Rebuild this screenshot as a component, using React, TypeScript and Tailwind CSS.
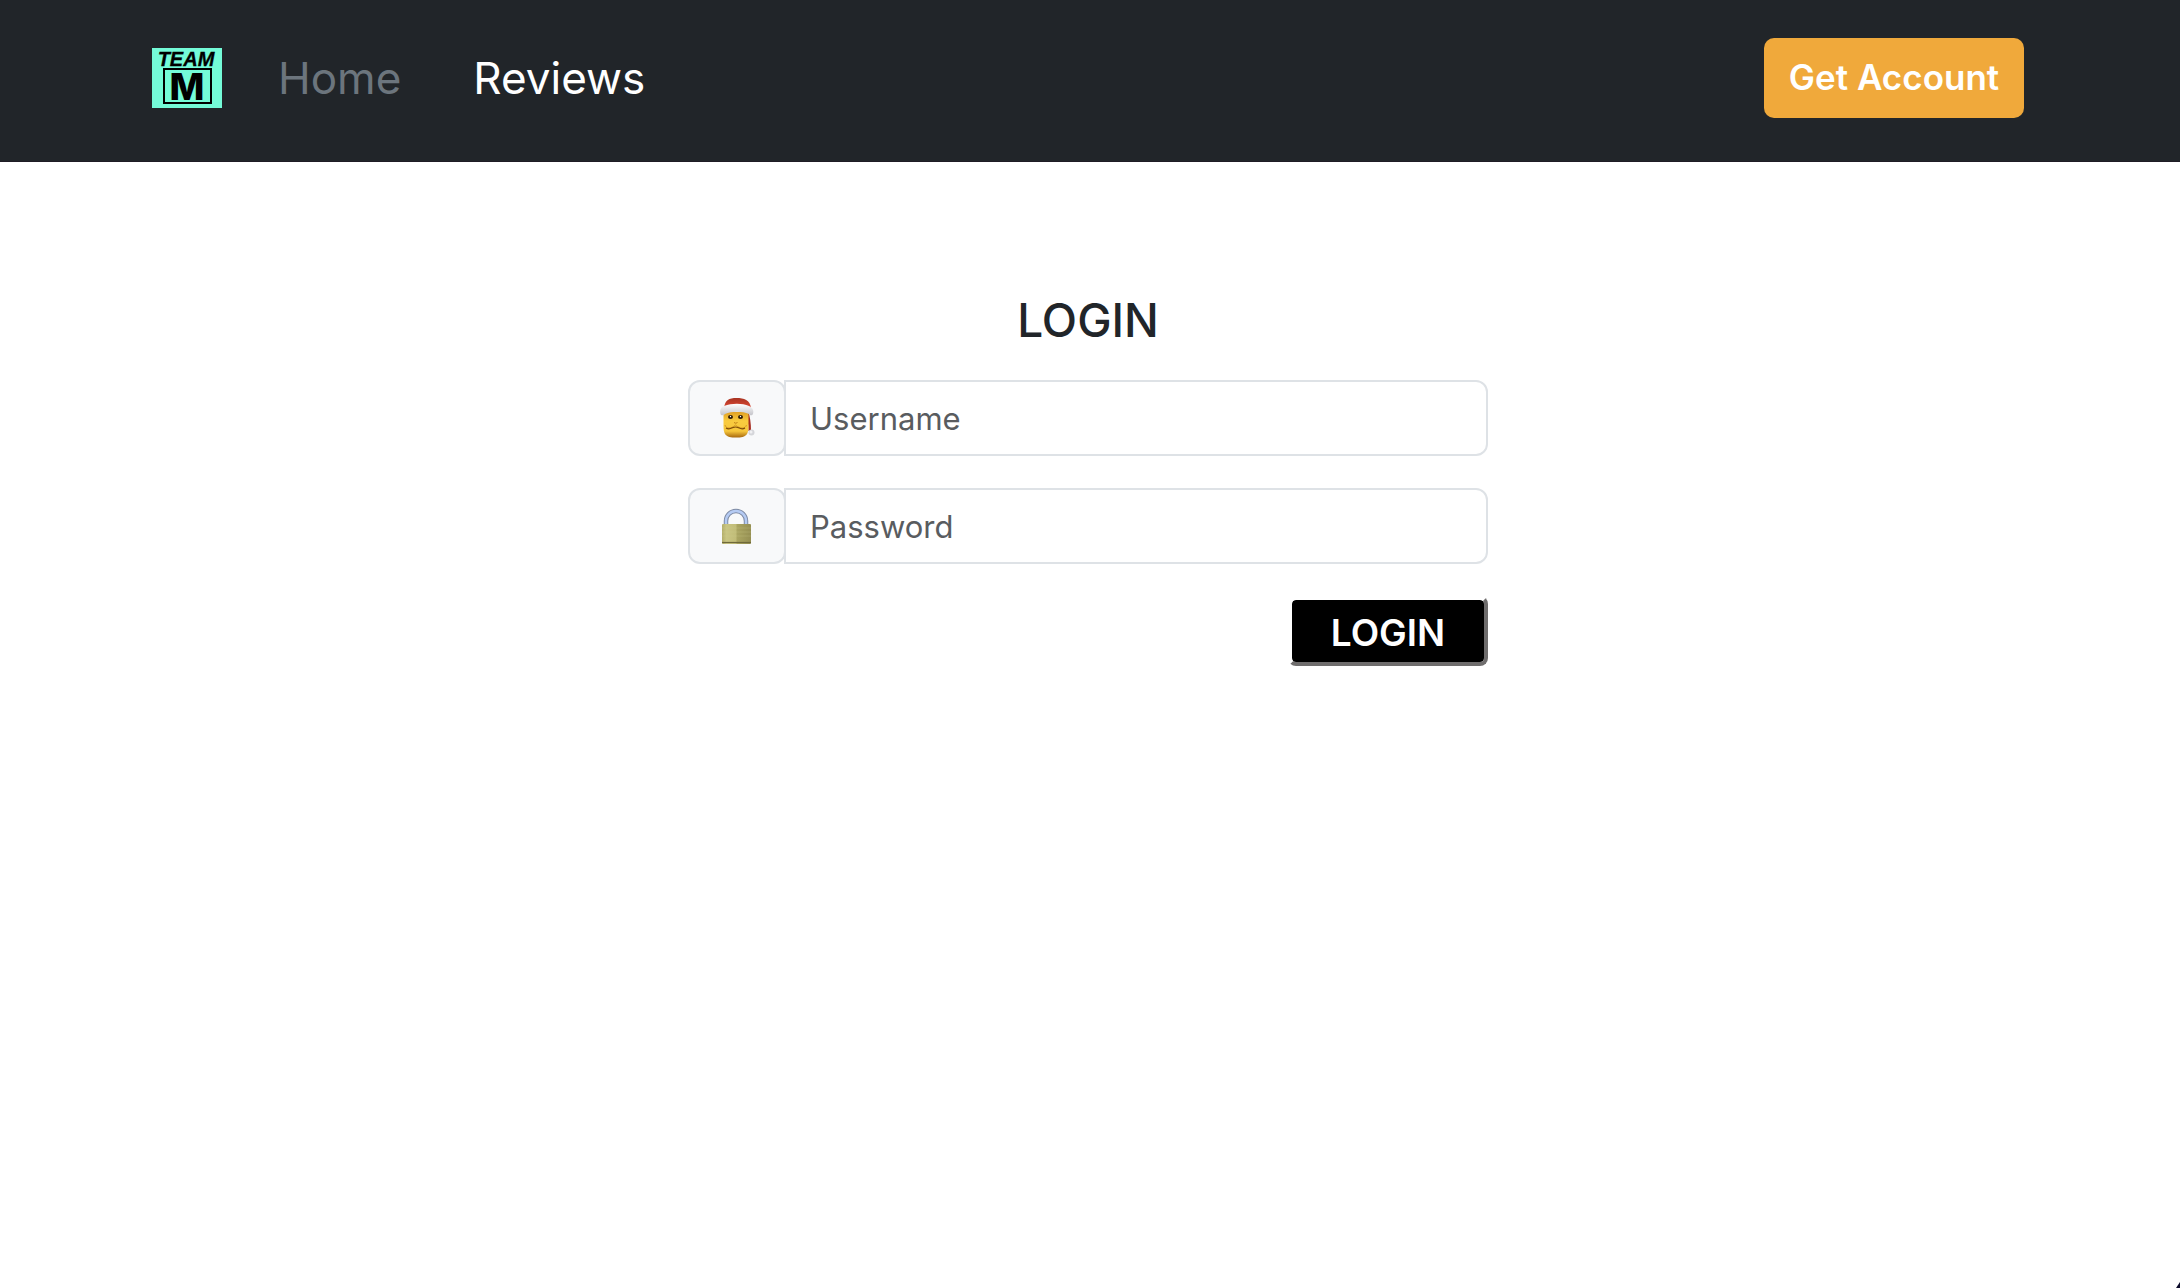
import type { ReactNode } from "react";

function Logo() {
  return (
    <svg viewBox="0 0 70 60" className="h-[60px] w-[70px]" role="img" aria-label="Team M">
      <rect width="70" height="60" fill="#74fbd8" />
      <text
        x="34"
        y="18"
        textAnchor="middle"
        fontFamily="'Liberation Sans', sans-serif"
        fontSize="20"
        fontWeight="700"
        fontStyle="italic"
        fill="#000"
        stroke="#000"
        strokeWidth="0.3"
      >
        TEAM
      </text>
      <rect x="12" y="21" width="47" height="34" fill="none" stroke="#000" strokeWidth="2" />
      <text
        x="35"
        y="52"
        textAnchor="middle"
        fontFamily="Inter, sans-serif"
        fontSize="37"
        fontWeight="800"
        fill="#000"
      >
        M
      </text>
    </svg>
  );
}

function SantaIcon() {
  return (
    <svg viewBox="0 0 36 42" className="h-[42px] w-9" role="img" aria-label="Username">
      <defs>
        <linearGradient id="face" x1="0" y1="0" x2="0" y2="1">
          <stop offset="0" stopColor="#e0a024" />
          <stop offset="0.35" stopColor="#f9cb3f" />
          <stop offset="0.75" stopColor="#f6c63c" />
          <stop offset="1" stopColor="#a8690f" />
        </linearGradient>
        <linearGradient id="hat" x1="0" y1="0" x2="0" y2="1">
          <stop offset="0" stopColor="#a83422" />
          <stop offset="1" stopColor="#de4833" />
        </linearGradient>
        <linearGradient id="fur" x1="0" y1="0" x2="0" y2="1">
          <stop offset="0" stopColor="#fff" />
          <stop offset="1" stopColor="#c4c4c9" />
        </linearGradient>
      </defs>
      <path d="M29 14c2 5 3 12 3 20h-2.500c0-7-1-12-2.500-18z" fill="#a52c1f" />
      <path d="M4.500 15h25v13c0 5-.5 7-1.500 9-2 3-6 3.500-11 3.500S8 40 6 37c-1-2-1.500-4-1.500-9z" fill="url(#face)" />
      <path d="M5 11C6 3 10 1 17.500 1S31 3 32 11z" fill="url(#hat)" />
      <path d="M1.500 17C.5 13 2 10 5 9c8-3 18-3 25 0 4 2 5 5 4 8-1 2-3 1.500-4 0-7-3-17-3-24 0-1 1.500-4 2-4.500 0z" fill="url(#fur)" />
      <circle cx="32.500" cy="35.500" r="3" fill="#d5d6da" />
      <circle cx="32" cy="35" r="1.500" fill="#f0f0f2" />
      <ellipse cx="11.500" cy="20" rx="2.500" ry="1.900" fill="#2c1a08" />
      <ellipse cx="21.500" cy="20" rx="2.500" ry="1.900" fill="#2c1a08" />
      <circle cx="11.500" cy="19.500" r=".7" fill="#fff" />
      <circle cx="21.500" cy="19.500" r=".7" fill="#fff" />
      <path d="M15 25.500q1.800 1.500 3.500 0" fill="none" stroke="#c08017" strokeWidth="1" />
      <path d="M6 28c1 4 6 4 10.500 0 4.500 4 10 4 11 0" fill="none" stroke="#d79b21" strokeWidth="1" />
      <path d="M7 31c3 2 5 .5 7-.5q2.500-1 5 0c2 1 4 2.500 7 .5" fill="none" stroke="#7d4a08" strokeWidth="1.200" />
    </svg>
  );
}

function LockIcon() {
  return (
    <svg viewBox="0 0 36 42" className="h-[42px] w-9" role="img" aria-label="Password">
      <defs>
        <linearGradient id="brass" x1="0" y1="0" x2="1" y2="0">
          <stop offset="0" stopColor="#b3ad69" />
          <stop offset="0.15" stopColor="#c9c582" />
          <stop offset="0.48" stopColor="#c1bc78" />
          <stop offset="0.52" stopColor="#aaa561" />
          <stop offset="1" stopColor="#958f52" />
        </linearGradient>
      </defs>
      <path d="M7 20v-4a10 10 0 0 1 20 0v4" fill="none" stroke="#7d8aa3" strokeWidth="4.500" />
      <path d="M7 20v-4a10 10 0 0 1 20 0v4" fill="none" stroke="#b5cbf3" strokeWidth="2.500" />
      <rect x="3" y="19" width="29" height="20" rx="1" fill="url(#brass)" />
      <path d="M3 23h29M3 27h29M3 31h29" stroke="#d5d192" strokeOpacity=".25" strokeWidth="1" />
      <path d="M3 37.500h29" stroke="#6f693a" strokeWidth="1.200" />
    </svg>
  );
}

function Field({ id, label, type, icon }: { id: string; label: string; type: string; icon: ReactNode }) {
  return (
    <div className="flex h-[76px]">
      <label
        htmlFor={id}
        className="flex w-[98px] shrink-0 items-center justify-center rounded-xl border-2 border-[#dee2e6] bg-[#f8f9fa]"
      >
        {icon}
      </label>
      <input
        id={id}
        type={type}
        placeholder={label}
        className="-ml-0.5 min-w-0 flex-1 rounded-r-xl border-2 border-[#dee2e6] bg-white px-6 pt-0.5 text-[31px] text-[#212529] placeholder:text-[#595c5f]"
      />
    </div>
  );
}

export default function App() {
  return (
    <div className="relative min-h-screen bg-white font-['Inter',sans-serif] text-[#212529]">
      <header className="flex h-[162px] items-start border-b border-[#1f1c25] bg-[#212529] pr-[156px] pl-[152px]">
        <a href="#" className="mt-12">
          <Logo />
        </a>
        <nav className="mt-12 ml-14 flex gap-[72px] text-[44px] leading-[60px]">
          <a href="#" className="text-[#6c757d]">Home</a>
          <a href="#" className="text-white">Reviews</a>
        </nav>
        <button
          type="button"
          className="mt-[38px] ml-auto h-20 w-[260px] rounded-[10px] bg-[#f0a93b] pb-0.5 text-[35px] font-semibold text-white"
        >
          Get Account
        </button>
      </header>
      <main className="pt-[130px] pr-1">
        <form className="mx-auto flex w-full max-w-[800px] flex-col">
          <h1 className="mb-8 text-center text-[46px] leading-[56px] font-medium">LOGIN</h1>
          <div className="flex flex-col gap-8">
            <Field id="username" label="Username" type="text" icon={<SantaIcon />} />
            <Field id="password" label="Password" type="password" icon={<LockIcon />} />
          </div>
          <button
            type="button"
            className="mt-8 h-[70px] w-[200px] self-end rounded-lg border-4 border-t-white border-r-[#6f6d6d] border-b-[#6f6d6d] border-l-white bg-black bg-clip-padding pt-0.5 text-[37px] leading-none font-semibold text-white"
          >
            LOGIN
          </button>
        </form>
      </main>
      <svg viewBox="0 0 4 6" className="absolute right-0 bottom-0 h-1.5 w-1" aria-hidden="true">
        <path d="M4 0v6H0z" fill="#0b0a2a" />
      </svg>
    </div>
  );
}
